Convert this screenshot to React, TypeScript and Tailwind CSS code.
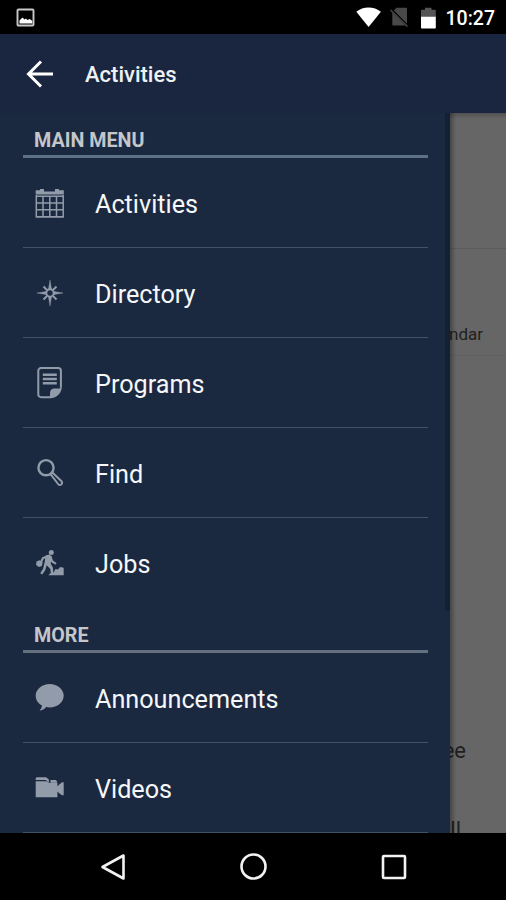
import type { ReactNode } from "react";

interface MenuItem {
  label: string;
  icon: ReactNode;
}

function CalendarIcon() {
  return (
    <svg viewBox="0 0 30 30" className="size-[30px]" fill="currentColor">
      <path d="M.7 2.3H5V1h4v2.6h11V1h4v1.3h4.8v4.2H.7z" />
      <path
        d="M1.3 7v22h26.9V7M1 8.2h27.5M1 15h27.5M1 21.8h27.5M1 28.7h27.5M8 8v20.500M14.800 8v20.500M21.500 8v20.500"
        fill="none"
        stroke="currentColor"
        strokeWidth="1.5"
      />
    </svg>
  );
}

function CompassIcon() {
  return (
    <svg viewBox="0 0 30 30" className="size-[30px]" fill="currentColor">
      <path d="M15 2l1.500 9h-3zM15 28l1.500-9h-3zM2 15l9-1.500v3zM28 15l-9-1.500v3z" stroke="currentColor" strokeWidth=".4" />
      <path
        d="M12 12L8.500 8.500M18 12l3.500-3.500M12 18l-3.500 3.500M18 18l3.500 3.500"
        stroke="currentColor"
        strokeWidth="1.9"
      />
      <circle cx="15" cy="15" r="3.700" fill="none" stroke="currentColor" strokeWidth="2" />
    </svg>
  );
}

function NoteIcon() {
  return (
    <svg viewBox="0 -1 30 32" className="h-8 w-[30px]" fill="none" stroke="currentColor">
      <path
        d="M15.500 29.200H6a2.700 2.700 0 0 1-2.700-2.700V2.800A2.700 2.700 0 0 1 6 .1h17.200a2.700 2.700 0 0 1 2.700 2.700v17"
        strokeWidth="2"
      />
      <path d="M7.800 6.700h14M7.800 11h14M7.800 15.300h14" strokeWidth="2.500" />
      <path d="M26.900 18.500c0 6-4.500 11.700-11.900 11.700v-4.900c0-3 1.500-4.800 4.500-4.800h2.700c2.700 0 4.700-.5 4.700-2z" fill="currentColor" stroke="none" />
    </svg>
  );
}

function SearchIcon() {
  return (
    <svg viewBox="0 0 30 30" className="size-[30px]" fill="none" stroke="currentColor">
      <circle cx="11" cy="9.700" r="7.600" strokeWidth="2.400" />
      <path
        d="M15.700 16.300l1.700-1.700 8.900 8.400c1.300 1.300.8 2.900 0 3.500-.9.700-2.400.5-3.200-.5z"
        strokeWidth="2"
        strokeLinejoin="round"
      />
    </svg>
  );
}

function WorkerIcon() {
  return (
    <svg viewBox="0 0 30 30" className="size-[30px]" fill="currentColor">
      <circle cx="16.300" cy="4.500" r="2.500" />
      <path
        d="M12.500 8.500L8 10l-2 4M15.500 9l1.800 4.500 3 1.800"
        fill="none"
        stroke="currentColor"
        strokeWidth="2.100"
        strokeLinecap="round"
        strokeLinejoin="round"
      />
      <path d="M10.500 7.500l4-.9 2.500 2.200-1.300 7 2.200 3.700.7 7H16l-.7-5.500-3.600-3.700-1.500 4.900-3 4.400-2-1.300 2.800-4.300L9.700 14z" />
      <path d="M1.500 13.500l3-1.200 3.200 2-.9 3.700-3 1-2.700-2z" />
      <path d="M13.500 27.200l1.700-2 3.500-.7 1.800-3.500 2.500.4 2.200-2.400 3.500.7v7.500z" />
    </svg>
  );
}

function BubbleIcon() {
  return (
    <svg viewBox="0 0 30 30" className="size-[30px]" fill="currentColor">
      <path d="M14.700 1C22.500 1 28.700 6.200 28.700 12.700S22.500 24.500 14.700 24.500c-1.200 0-2.400-.1-3.500-.4-1.700 2-4 3.500-6.700 3.500 1.300-1.200 2.200-2.700 2.500-5C3.200 20.500.7 17 .7 12.700.7 6.200 7 1 14.700 1z" />
    </svg>
  );
}

function VideoIcon() {
  return (
    <svg viewBox="0 0 30 30" className="size-[30px]" fill="currentColor">
      <path d="M.7 8.200h10.500l3.200 1.500h8v14.500H.7z" />
      <path d="M1.700 4.200h9.500l2.800 2.500v2h-1.300l-2-1.600H.7V5.200zM15.500 7h5.200l1.300 1.300v1.400h-6.500z" />
      <path d="M22 13.500l5-4.300h1.700v13H27L22 18.400z" />
    </svg>
  );
}

const mainMenu: MenuItem[] = [
  { label: "Activities", icon: <CalendarIcon /> },
  { label: "Directory", icon: <CompassIcon /> },
  { label: "Programs", icon: <NoteIcon /> },
  { label: "Find", icon: <SearchIcon /> },
  { label: "Jobs", icon: <WorkerIcon /> },
];

const moreMenu: MenuItem[] = [
  { label: "Announcements", icon: <BubbleIcon /> },
  { label: "Videos", icon: <VideoIcon /> },
];

function StatusBar() {
  return (
    <div className="flex h-[34px] items-center justify-between bg-black pr-[11px] pl-4">
      <svg viewBox="0 0 20 20" className="mt-px size-5" fill="none">
        <rect x="1.500" y="1.500" width="16" height="16" rx="1" stroke="#c8c8c8" strokeWidth="1.900" />
        <path d="M3.500 15.500v-3l3-3 2 2 1.500-1 1.500 1.500 2.300-1 2.500 2v2.500z" fill="#fff" />
      </svg>

      <div className="flex items-center">
        <svg viewBox="0 0 26 20" className="mr-2 h-5 w-[26px]" fill="#fff">
          <path d="M1.300 4.800C8-1 19-1 25.900 4.800L13.600 20z" />
        </svg>
        <svg viewBox="0 0 20 20" className="mr-3 size-5">
          <path d="M7.500.7h9.300c.8 0 1.200.4 1.200 1.200v15.500c0 .8-.4 1.200-1.200 1.200H4.500c-.8 0-1.200-.4-1.200-1.200V5z" fill="#484848" />
          <path d="M2.500 2.800l16.500 16.500" stroke="#000" strokeWidth="2.500" />
          <path d="M1.500 3l17 16.500" stroke="#484848" strokeWidth="1.500" />
        </svg>
        <svg viewBox="0 0 15 22" className="mt-px mr-2.5 h-[22px] w-[15px]">
          <path d="M4 .7h6.500v2H14c.5 0 .8.300.8.800V10H0V3.500c0-.5.300-.8.800-.8H4z" fill="#555" />
          <path d="M0 9.700h14.800v11c0 .5-.3.800-.8.800H.8c-.5 0-.8-.3-.8-.8z" fill="#fff" />
        </svg>
        <span className="pt-[3px] text-[19.5px] leading-none font-medium text-white">10:27</span>
      </div>
    </div>
  );
}

function SectionTitle({ title, lineClass }: { title: string; lineClass: string }) {
  return (
    <div className={`flex h-[45px] items-end border-b-3 pb-0.5 pl-[11px] ${lineClass}`}>
      <h2 className="text-[19.7px] leading-6 font-bold text-[#c3c6ca]">{title}</h2>
    </div>
  );
}

function MenuList({ items, lastLine = false }: { items: MenuItem[]; lastLine?: boolean }) {
  return (
    <ul>
      {items.map((item, i) => (
        <li
          key={item.label}
          className={`flex h-[90px] items-center gap-[30px] border-b pl-3 ${
            i === items.length - 1 && !lastLine ? "border-transparent" : "border-[#435166]"
          }`}
        >
          <span className="text-[#929ba9]">{item.icon}</span>
          <span className="pt-1 text-[25.2px] leading-none text-[#f6f7f9]">{item.label}</span>
        </li>
      ))}
    </ul>
  );
}

export default function App() {
  return (
    <div className="flex h-[900px] w-[506px] flex-col overflow-hidden bg-black font-['Roboto',sans-serif]">
      <StatusBar />

      <header className="flex h-[79px] items-center bg-[#1a263f] pl-[26px]">
        <svg viewBox="0 0 28 28" className="size-7" fill="none" stroke="#fff" strokeWidth="3">
          <path d="M27 14H2.500M15 1.500L2.500 14 15 26.500" />
        </svg>
        <h1 className="ml-[31px] pt-0.5 text-[22px] leading-none font-medium text-[#eef0f3]">
          Activities
        </h1>
      </header>

      <div className="flex h-[720px] overflow-hidden">
        {/* Drawer */}
        <nav className="relative w-[450px] shrink-0 overflow-hidden bg-[#1b2940] pr-[22px] pl-[23px]">
          <SectionTitle title="MAIN MENU" lineClass="border-[#5c7086]" />
          <MenuList items={mainMenu} />
          <SectionTitle title="MORE" lineClass="border-[#64707f]" />
          <MenuList items={moreMenu} lastLine />

          {/* Scrollbar */}
          <div className="absolute top-0 right-0 h-[498px] w-[5px] rounded-b-sm bg-[#132232]" />
        </nav>

        {/* Dimmed page behind the drawer */}
        <main className="relative flex w-14 flex-col overflow-hidden bg-[#666] text-[#202020]">
          <div className="h-[136px] shrink-0 border-b border-[#5b5b5b]" />
          <div className="flex h-[107px] shrink-0 items-end justify-end border-b border-[#606060] pr-[23px] pb-[11px] text-[17px] leading-5">
            Calendar
          </div>
          <div className="flex h-[408px] shrink-0 items-end justify-end pr-10 text-[22px] leading-[26px]">
            free
          </div>
          <div className="mt-[53px] flex shrink-0 justify-end pr-[45px] text-[22px] leading-[26px]">
            all
          </div>
          <div className="absolute inset-y-0 left-0 w-1.5 bg-linear-to-r from-black/30 to-transparent" />
          <div className="absolute inset-x-0 top-0 h-1.5 bg-linear-to-b from-black/20 to-transparent" />
        </main>
      </div>

      <footer className="flex h-[67px] items-center justify-between bg-black pr-[98px] pl-[100px]">
        <svg viewBox="0 0 28 28" className="size-7" fill="none" stroke="#f2f2f2" strokeWidth="2.600">
          <path d="M23.500 2.500v23L2.500 14z" strokeLinejoin="round" />
        </svg>
        <svg viewBox="0 0 28 28" className="size-7" fill="none" stroke="#f2f2f2" strokeWidth="2.600">
          <circle cx="13.500" cy="13.500" r="12" />
        </svg>
        <svg viewBox="0 0 28 28" className="size-7" fill="none" stroke="#f2f2f2" strokeWidth="2.600">
          <rect x="3" y="3" width="22" height="22" rx="1" />
        </svg>
      </footer>
    </div>
  );
}
